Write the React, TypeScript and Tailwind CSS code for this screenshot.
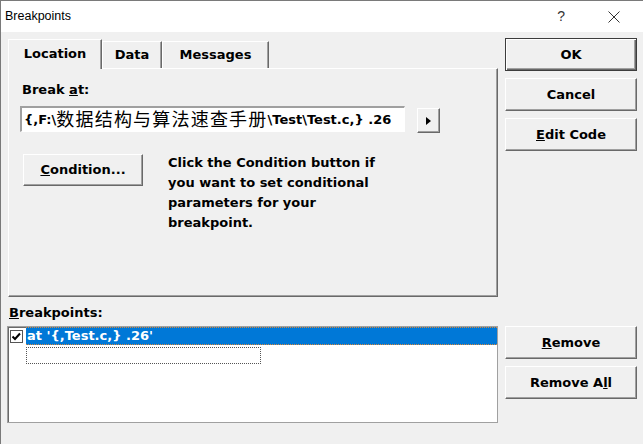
import type { ReactNode } from 'react';

function Btn({
  children,
  isDefault = false,
  className = '',
}: {
  children: ReactNode;
  isDefault?: boolean;
  className?: string;
}) {
  const bevel = isDefault
    ? 'border border-[#3c3c3c] shadow-[inset_1px_1px_0_#fff,inset_-1px_-1px_0_#696969,inset_-2px_-2px_0_#a0a0a0]'
    : 'border border-t-white border-l-white border-r-[#696969] border-b-[#696969] shadow-[inset_-1px_-1px_0_#a0a0a0]';
  return (
    <div
      className={`flex shrink-0 items-center justify-center bg-[#f0f0f0] text-[13px] font-bold text-black ${bevel} ${className}`}
    >
      {children}
    </div>
  );
}

function Tab({ label, active = false, className = '' }: { label: string; active?: boolean; className?: string }) {
  return (
    <div
      className={`flex items-center justify-center border-t border-l border-t-white border-l-white border-r border-r-[#696969] bg-[#f0f0f0] shadow-[inset_-1px_0_0_#a0a0a0] ${
        active ? 'relative z-10 -mb-px h-[30px] pb-[1px]' : 'h-[27px]'
      } ${className}`}
    >
      {label}
    </div>
  );
}

export default function App() {
  return (
    <div className="flex h-[444px] w-[643px] flex-col overflow-hidden border-l border-t border-[#7a7a7a] bg-[#f0f0f0] font-['DejaVu_Sans','Noto_Sans_CJK_SC',sans-serif] text-[13px] font-bold text-black">
      {/* title bar */}
      <div className="flex h-[31px] shrink-0 items-center bg-white pl-[4px]">
        <span className="font-['Liberation_Sans',sans-serif] text-[12.5px] font-normal">Breakpoints</span>
        <span className="ml-auto font-['Liberation_Sans',sans-serif] text-[14px] font-normal text-[#333]">?</span>
        <svg className="ml-[43px] mr-[23px]" width="12" height="12" viewBox="0 0 12 12">
          <path d="M0.5 0.5 L11.5 11.5 M11.5 0.5 L0.5 11.5" stroke="#333" strokeWidth="1" fill="none" />
        </svg>
      </div>

      <div className="flex flex-1 gap-[7px] pl-[6px]">
        {/* left column */}
        <div className="flex w-[491px] flex-col pt-[6px]">
          <div className="flex h-[30px] items-end pl-[1px]">
            <Tab label="Location" active className="w-[94px]" />
            <Tab label="Data" className="w-[60px]" />
            <Tab label="Messages" className="w-[107px]" />
          </div>

          <div className="ml-px h-[229px] w-[490px] border-t border-l border-t-white border-l-white border-r border-b border-r-[#696969] border-b-[#696969] pl-[13px] pt-[13px] shadow-[inset_-1px_-1px_0_#a0a0a0]">
            <div className="leading-[16px]">
              Break <span className="underline">a</span>t:
            </div>
            <div className="mt-[8px] ml-[-2px] flex items-start">
              <div className="flex h-[26px] w-[385px] items-center overflow-hidden whitespace-nowrap border-t-2 border-l-2 border-t-[#a0a0a0] border-l-[#a0a0a0] border-b border-r border-b-white border-r-white bg-white pl-[2px]">
                {'{,F:\\'}
                <span className="text-[18px] font-normal tracking-[1.2px]">数据结构与算法速查手册</span>
                {'\\Test\\Test.c,} .26'}
              </div>
              <Btn className="ml-[12px] mt-[2px] h-[25px] w-[23px]">
                <svg width="5" height="8" viewBox="0 0 5 8">
                  <polygon points="0,0 5,4 0,8" fill="#000" />
                </svg>
              </Btn>
            </div>
            <div className="mt-[21px] ml-px flex items-start">
              <Btn className="h-[32px] w-[120px]">
                <span>
                  <span className="underline">C</span>ondition...
                </span>
              </Btn>
              <p className="ml-[25px] mt-[-1px] leading-[20px]">
                Click the Condition button if
                <br />
                you want to set conditional
                <br />
                parameters for your
                <br />
                breakpoint.
              </p>
            </div>
          </div>

          <div className="mt-[8px] pl-[2px] leading-[16px]">
            <span className="underline">B</span>reakpoints:
          </div>
          <div className="mt-[5px] h-[97px] w-[491px] border border-[#a0a0a0] bg-white shadow-[inset_1px_1px_0_#696969]">
            <div className="flex h-[18px] items-center pl-[2px]">
              <svg width="13" height="13" viewBox="0 0 13 13" className="shrink-0">
                <rect x="0.5" y="0.5" width="12" height="12" fill="#fff" stroke="#555" />
                <path d="M2.5 6.5 L5 9 L10 3.5" stroke="#000" strokeWidth="2" fill="none" />
              </svg>
              <div className="ml-[3px] flex h-[18px] flex-1 items-center border-y border-dotted border-y-[#d8893c] bg-[#0078d7] pl-px text-white">
                at '{'{'},Test.c,{'}'} .26'
              </div>
            </div>
            <div className="ml-[18px] mt-[2px] h-[17px] w-[235px] border border-dotted border-[#555]" />
          </div>
        </div>

        {/* right column */}
        <div className="flex w-[132px] flex-col gap-[7px] pt-[6px]">
          <Btn isDefault className="h-[33px] w-[132px]">OK</Btn>
          <Btn className="h-[33px] w-[132px]">Cancel</Btn>
          <Btn className="h-[33px] w-[132px]">
            <span>
              <span className="underline">E</span>dit Code
            </span>
          </Btn>
          <Btn className="mt-[168px] h-[33px] w-[132px]">
            <span>
              <span className="underline">R</span>emove
            </span>
          </Btn>
          <Btn className="h-[33px] w-[132px]">
            <span>
              Remove A<span className="underline">l</span>l
            </span>
          </Btn>
        </div>
      </div>
    </div>
  );
}
